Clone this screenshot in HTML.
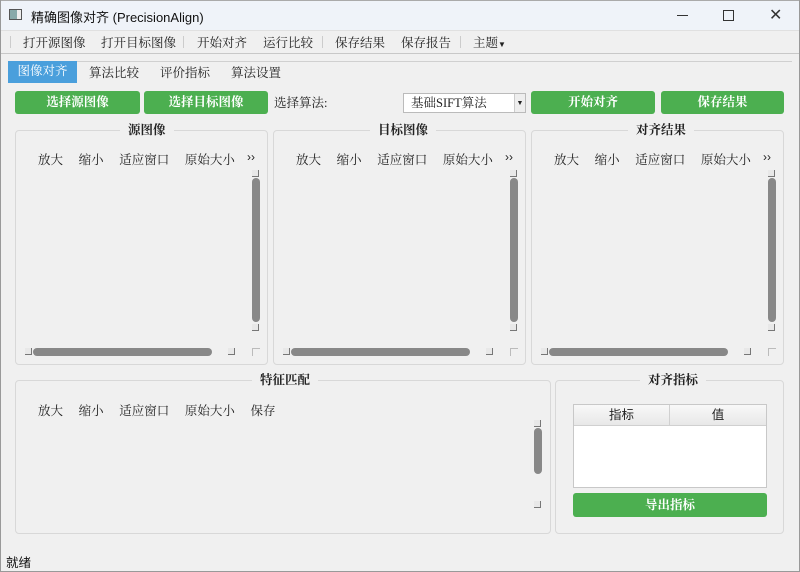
<!DOCTYPE html><html><head><meta charset="utf-8"><style>
*{margin:0;padding:0;box-sizing:border-box}
body{width:800px;height:572px;background:#f0f0f0;font-family:"Liberation Serif","Noto Serif CJK SC",serif;font-size:12px;color:#222;position:relative;overflow:hidden}
.a{position:absolute;white-space:nowrap}
.title{left:0;top:0;width:800px;height:30px;background:#eff3f9;border:1px solid #aaa;border-bottom:none}
.sans{font-family:"Liberation Sans","Noto Sans CJK SC",sans-serif}
.btn{background:#4caf50;color:#fff;font-weight:bold;text-align:center;border-radius:3px;font-size:12.5px}
.grp{border:1px solid #d8d8d8;border-radius:4px}
.gt{font-weight:bold;background:#f0f0f0;padding:0 8px;font-size:12.5px}
.vs{width:8px;background:#888;border-radius:4px}
.hs{height:8px;background:#888;border-radius:4px}
.sm{width:7px;height:7px;border-right:1px solid #777;border-bottom:1px solid #777;background:#e8e8e8}
</style></head><body>
<div class="a title"></div>
<div class="a" style="left:9px;top:9px;width:13px;height:11px;border:1px solid #555;background:#8aa"><div style="position:absolute;right:0;top:0;width:4px;height:9px;background:#eee"></div></div>
<div class="a sans" style="left:31px;top:7px;font-size:13px;color:#111">精确图像对齐 (PrecisionAlign)</div>
<div class="a" style="left:677px;top:15px;width:11px;height:1px;background:#333"></div>
<div class="a" style="left:723px;top:10px;width:11px;height:11px;border:1px solid #333"></div>
<div class="a sans" style="left:769px;top:5px;font-size:16px;color:#333">✕</div>
<div class="a" style="left:0;top:30px;width:800px;height:1px;background:#e0e0e0"></div>
<div class="a" style="left:0;top:53px;width:800px;height:1px;background:#c8c8c8"></div>
<div class="a" style="left:10px;top:36px;width:1px;height:12px;background:#ccc"></div>
<div class="a" style="left:23px;top:33px;font-size:12.5px">打开源图像</div>
<div class="a" style="left:101px;top:33px;font-size:12.5px">打开目标图像</div>
<div class="a" style="left:183px;top:36px;width:1px;height:12px;background:#ccc"></div>
<div class="a" style="left:197px;top:33px;font-size:12.5px">开始对齐</div>
<div class="a" style="left:263px;top:33px;font-size:12.5px">运行比较</div>
<div class="a" style="left:322px;top:36px;width:1px;height:12px;background:#ccc"></div>
<div class="a" style="left:335px;top:33px;font-size:12.5px">保存结果</div>
<div class="a" style="left:401px;top:33px;font-size:12.5px">保存报告</div>
<div class="a" style="left:460px;top:36px;width:1px;height:12px;background:#ccc"></div>
<div class="a" style="left:473px;top:33px;font-size:12.5px">主题<span style="font-size:8px">▼</span></div>
<div class="a" style="left:8px;top:61px;width:784px;height:1px;background:#d0d0d0"></div>
<div class="a" style="left:8px;top:61px;width:69px;height:22px;background:#4a9fdc;color:#fff;text-align:center;line-height:21px;font-size:12.5px">图像对齐</div>
<div class="a" style="left:89px;top:63px;font-size:12.5px">算法比较</div>
<div class="a" style="left:160px;top:63px;font-size:12.5px">评价指标</div>
<div class="a" style="left:231px;top:63px;font-size:12.5px">算法设置</div>
<div class="a btn" style="left:15px;top:91px;width:125px;height:23px;line-height:23px">选择源图像</div>
<div class="a btn" style="left:144px;top:91px;width:124px;height:23px;line-height:23px">选择目标图像</div>
<div class="a" style="left:274px;top:93px;font-size:12.5px">选择算法:</div>
<div class="a" style="left:403px;top:93px;width:123px;height:20px;background:#fff;border:1px solid #bbb;padding-left:7px;line-height:18px;font-size:12.5px">基础SIFT算法<span style="position:absolute;right:0;top:0;width:11px;height:18px;border-left:1px solid #ccc;background:#eee;font-size:7px;text-align:center">▼</span></div>
<div class="a btn" style="left:531px;top:91px;width:124px;height:23px;line-height:23px">开始对齐</div>
<div class="a btn" style="left:661px;top:91px;width:123px;height:23px;line-height:23px">保存结果</div>

<div class="a grp" style="left:15px;top:130px;width:253px;height:235px"></div>
<div class="a grp" style="left:273px;top:130px;width:253px;height:235px"></div>
<div class="a grp" style="left:531px;top:130px;width:253px;height:235px"></div>
<div class="a gt" style="left:120px;top:120px">源图像</div>
<div class="a gt" style="left:370px;top:120px">目标图像</div>
<div class="a gt" style="left:628px;top:120px">对齐结果</div>

<div class="a" style="left:38px;top:150px;font-size:12.5px">放大&nbsp;&nbsp;&nbsp;&nbsp;&nbsp;缩小&nbsp;&nbsp;&nbsp;&nbsp;&nbsp;适应窗口&nbsp;&nbsp;&nbsp;&nbsp;&nbsp;原始大小</div>
<div class="a sans" style="left:247px;top:150px;font-size:12px">››</div>
<div class="a" style="left:296px;top:150px;font-size:12.5px">放大&nbsp;&nbsp;&nbsp;&nbsp;&nbsp;缩小&nbsp;&nbsp;&nbsp;&nbsp;&nbsp;适应窗口&nbsp;&nbsp;&nbsp;&nbsp;&nbsp;原始大小</div>
<div class="a sans" style="left:505px;top:150px;font-size:12px">››</div>
<div class="a" style="left:554px;top:150px;font-size:12.5px">放大&nbsp;&nbsp;&nbsp;&nbsp;&nbsp;缩小&nbsp;&nbsp;&nbsp;&nbsp;&nbsp;适应窗口&nbsp;&nbsp;&nbsp;&nbsp;&nbsp;原始大小</div>
<div class="a sans" style="left:763px;top:150px;font-size:12px">››</div>

<div class="a sm" style="left:252px;top:170px"></div><div class="a vs" style="left:252px;top:178px;height:144px"></div><div class="a sm" style="left:252px;top:324px"></div>
<div class="a sm" style="left:25px;top:348px"></div><div class="a hs" style="left:33px;top:348px;width:179px"></div><div class="a sm" style="left:228px;top:348px"></div>
<div class="a" style="left:252px;top:348px;width:8px;height:8px;border-left:1px solid #bbb;border-top:1px solid #bbb"></div>
<div class="a sm" style="left:510px;top:170px"></div><div class="a vs" style="left:510px;top:178px;height:144px"></div><div class="a sm" style="left:510px;top:324px"></div>
<div class="a sm" style="left:283px;top:348px"></div><div class="a hs" style="left:291px;top:348px;width:179px"></div><div class="a sm" style="left:486px;top:348px"></div>
<div class="a" style="left:510px;top:348px;width:8px;height:8px;border-left:1px solid #bbb;border-top:1px solid #bbb"></div>
<div class="a sm" style="left:768px;top:170px"></div><div class="a vs" style="left:768px;top:178px;height:144px"></div><div class="a sm" style="left:768px;top:324px"></div>
<div class="a sm" style="left:541px;top:348px"></div><div class="a hs" style="left:549px;top:348px;width:179px"></div><div class="a sm" style="left:744px;top:348px"></div>
<div class="a" style="left:768px;top:348px;width:8px;height:8px;border-left:1px solid #bbb;border-top:1px solid #bbb"></div>

<div class="a grp" style="left:15px;top:380px;width:536px;height:154px"></div>
<div class="a gt" style="left:252px;top:370px">特征匹配</div>
<div class="a" style="left:38px;top:401px;font-size:12.5px">放大&nbsp;&nbsp;&nbsp;&nbsp;&nbsp;缩小&nbsp;&nbsp;&nbsp;&nbsp;&nbsp;适应窗口&nbsp;&nbsp;&nbsp;&nbsp;&nbsp;原始大小&nbsp;&nbsp;&nbsp;&nbsp;&nbsp;保存</div>
<div class="a sm" style="left:534px;top:420px"></div><div class="a vs" style="left:534px;top:428px;height:46px"></div><div class="a sm" style="left:534px;top:501px"></div>

<div class="a grp" style="left:555px;top:380px;width:229px;height:154px"></div>
<div class="a gt" style="left:640px;top:370px">对齐指标</div>
<div class="a" style="left:573px;top:404px;width:194px;height:84px;background:#fff;border:1px solid #c8c8c8"></div>
<div class="a sans" style="left:574px;top:405px;width:192px;height:21px;background:linear-gradient(#f8f8f8,#e8e8e8);border-bottom:1px solid #d0d0d0;font-size:12.5px;line-height:21px"><span style="position:absolute;left:0;width:96px;text-align:center;border-right:1px solid #d0d0d0">指标</span><span style="position:absolute;left:96px;width:96px;text-align:center">值</span></div>
<div class="a btn" style="left:573px;top:493px;width:194px;height:24px;line-height:24px">导出指标</div>

<div class="a sans" style="left:6px;top:552px;font-size:12.5px;color:#111">就绪</div>
<div class="a" style="left:0;top:0;width:800px;height:572px;border:1px solid #999;border-top:none"></div>
</body></html>
